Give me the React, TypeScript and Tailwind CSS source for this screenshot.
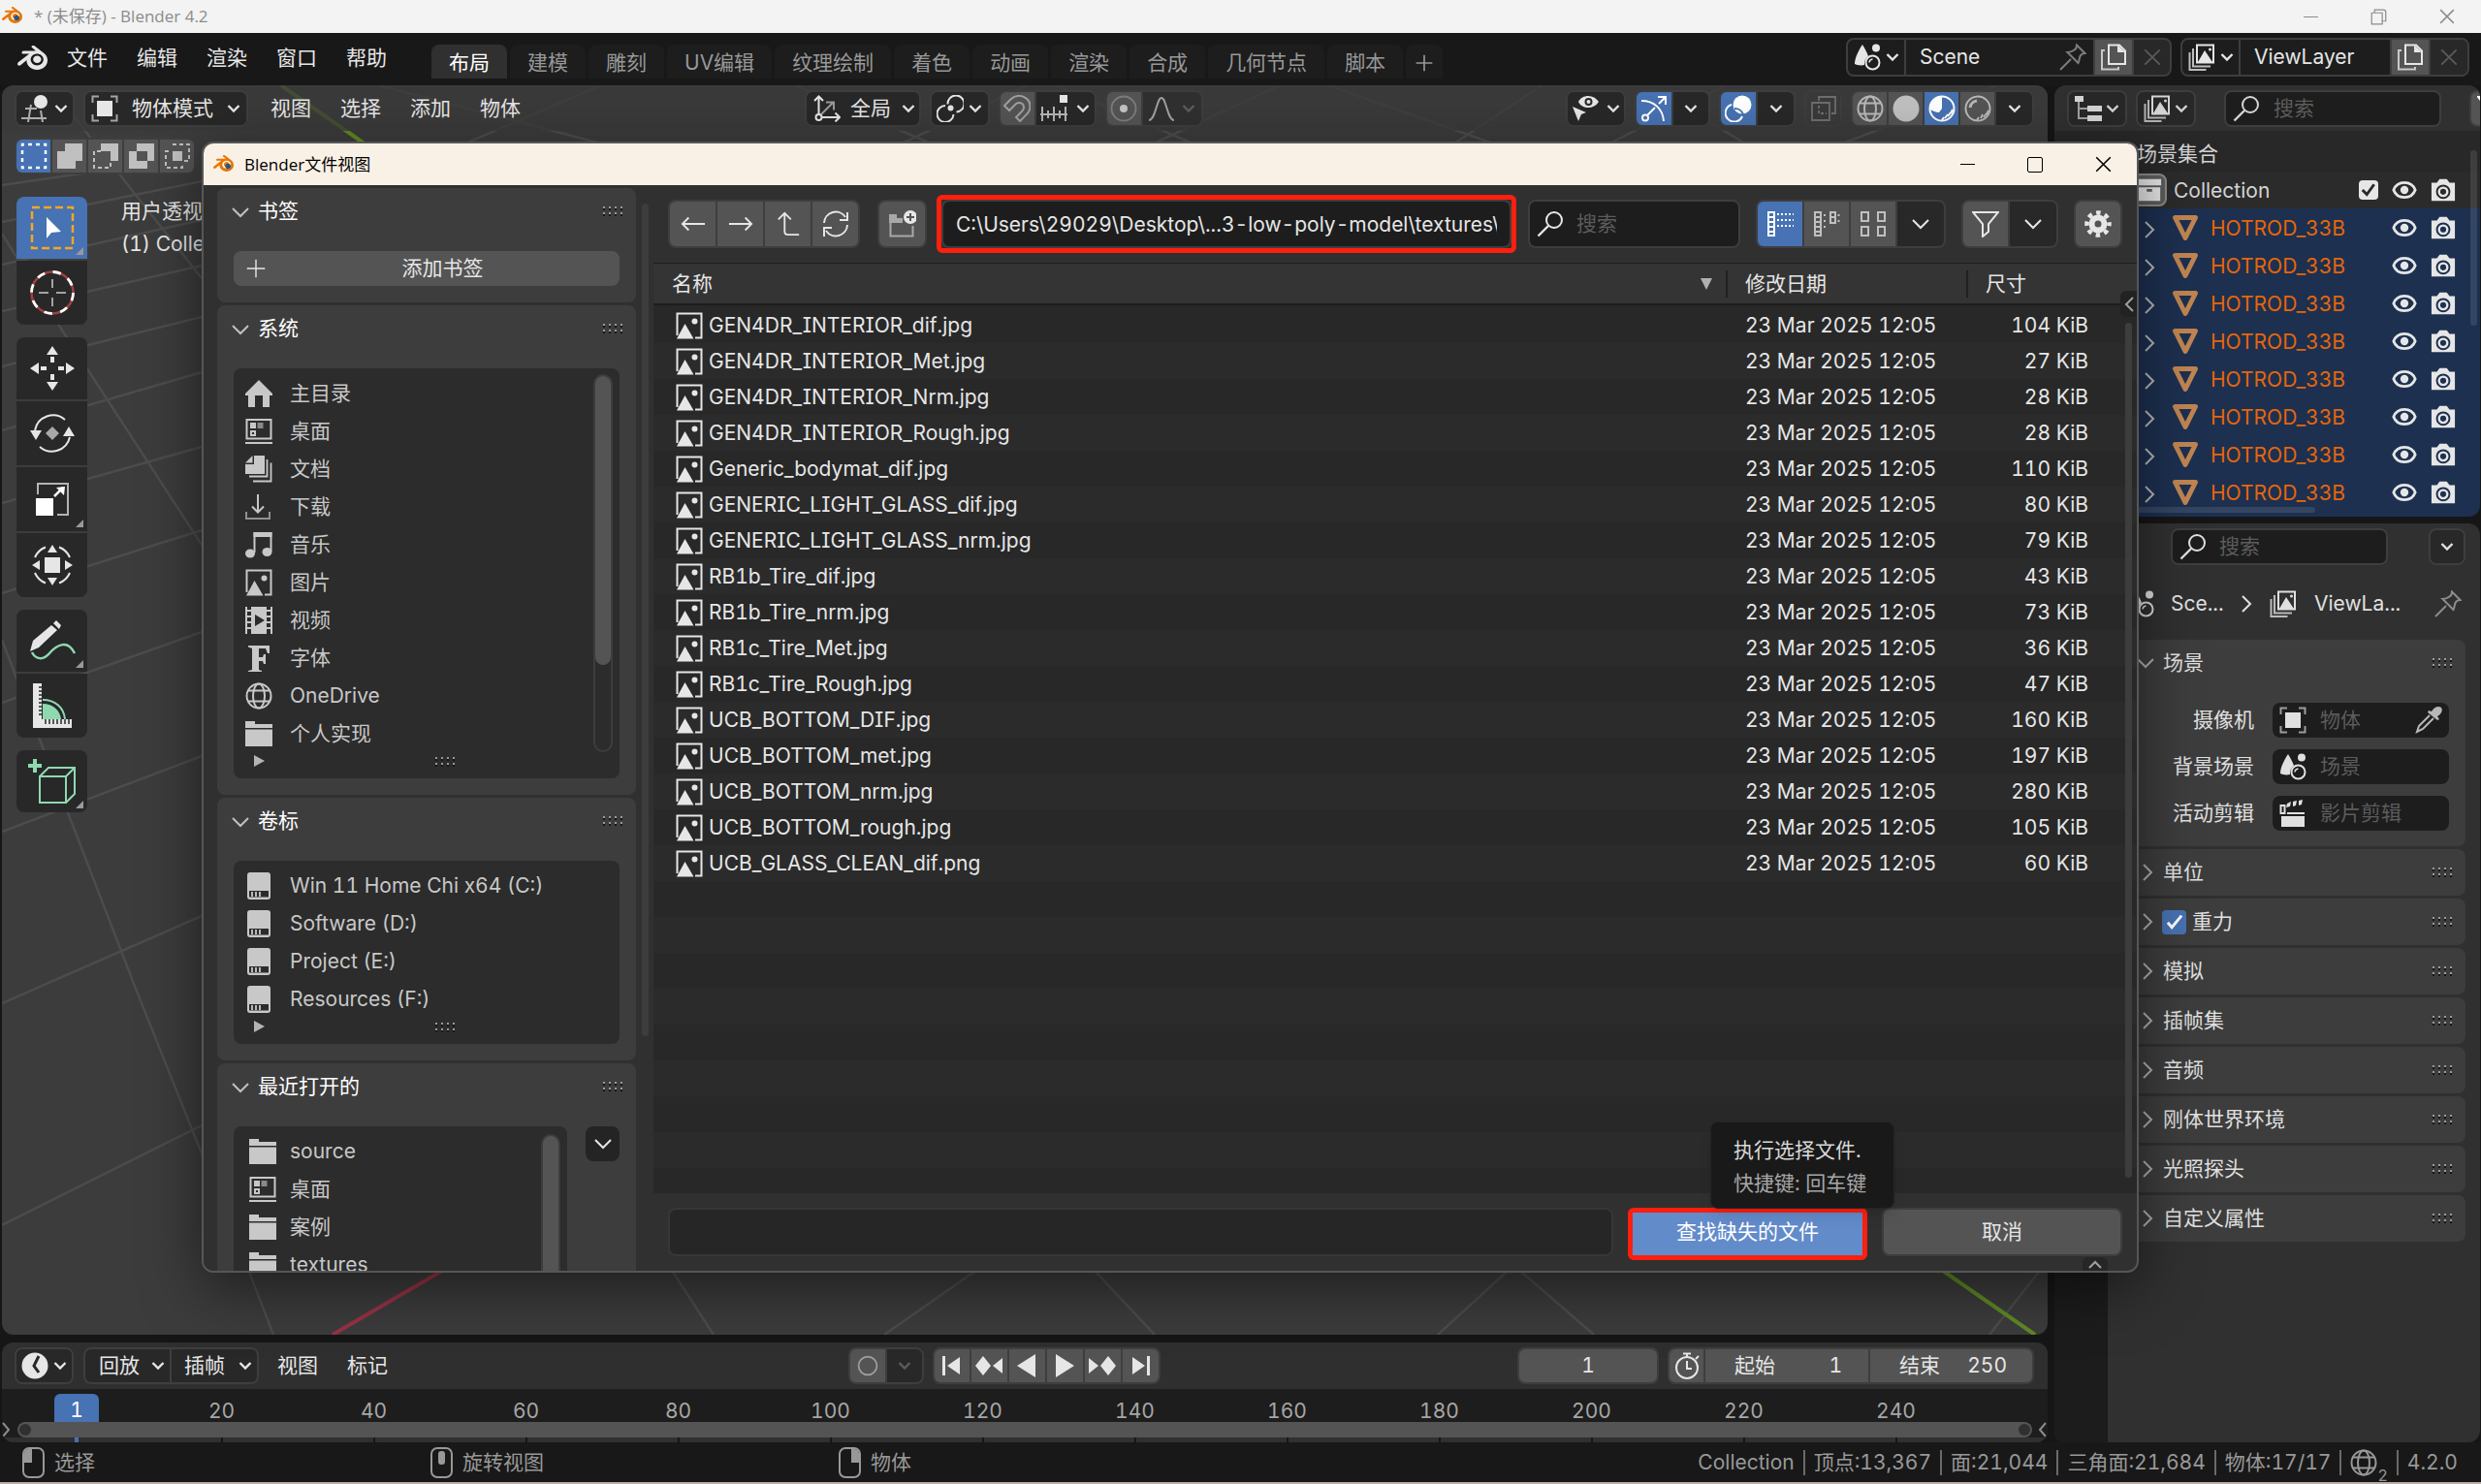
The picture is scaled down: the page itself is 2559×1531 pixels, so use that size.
import type { ReactNode } from "react";
import { SiBlender } from "react-icons/si";

/* ---------- icons ---------- */

function Ic({ children, size = 28, className = "" }: { children: ReactNode; size?: number; className?: string }) {
  return (
    <svg
      width={size}
      height={size}
      viewBox="0 0 28 28"
      fill="none"
      stroke="currentColor"
      strokeWidth="2"
      className={"shrink-0 " + className}
      aria-hidden="true"
    >
      {children}
    </svg>
  );
}

const F = { fill: "currentColor", stroke: "none" } as const;

const Down = ({ className = "" }: { className?: string }) => (
  <svg width="14" height="10" viewBox="0 0 14 10" fill="none" stroke="currentColor" strokeWidth="2.4" className={"shrink-0 " + className} aria-hidden="true">
    <path d="M1.500 2 7 7.600 12.500 2" />
  </svg>
);
const BigDown = () => (
  <svg width="18" height="12" viewBox="0 0 18 12" fill="none" stroke="currentColor" strokeWidth="2" className="shrink-0" aria-hidden="true">
    <path d="M1 2l8 8 8-8" />
  </svg>
);
const Right = () => (
  <svg width="12" height="20" viewBox="0 0 12 20" fill="none" stroke="currentColor" strokeWidth="2" className="shrink-0" aria-hidden="true">
    <path d="M2 2l8 8-8 8" />
  </svg>
);
const Grip = () => (
  <svg width="22" height="10" viewBox="0 0 22 10" className="shrink-0" aria-hidden="true">
    {[0, 6, 12, 18].map((x) => (
      <g key={x}>
        <path d={`M${x + 1} 0h2v2h-2zM${x + 1} 6h2v2h-2z`} fill="#9a9a9a" />
        <path d={`M${x + 1} 2h2v2h-2zM${x + 1} 8h2v2h-2z`} fill="#151515" />
      </g>
    ))}
  </svg>
);

const Logo = () => (
  <svg width="24" height="24" viewBox="0 0 24 24" className="shrink-0" aria-hidden="true">
    <circle cx="15" cy="13.8" r="5.4" fill="#fff" />
    <SiBlender x="0" y="0" width="24" height="24" color="#ea7600" />
    <circle cx="15.2" cy="13.5" r="2.8" fill="#265787" />
  </svg>
);

const Search = () => (
  <Ic>
    <circle cx="18" cy="10" r="8" />
    <path d="M12 16 1.500 26.500" strokeWidth="2.4" />
  </Ic>
);
const Photo = () => (
  <Ic>
    <path d="M20 26.500h6.500V1.500H1.500V24" />
    <path {...F} d="M1 27.500 9.500 12l9 15.500z" />
    <circle {...F} cx="19.500" cy="9.500" r="3" />
  </Ic>
);
const SceneIc = () => (
  <Ic>
    <path {...F} d="M9 1c3 5 5 9 6 12-3 2-4 5-4 9-4 1-8 0-10-1C1 15 5 7 9 1z" />
    <circle {...F} cx="23" cy="4.500" r="4" />
    <circle cx="19.500" cy="19.500" r="7" />
    <path d="M16 19.500a4 4 0 0 1 3.500-3.500" strokeWidth="1.600" />
  </Ic>
);
const LayerIc = () => (
  <Ic>
    <path d="M9 1.500h17v18H9z" />
    <path {...F} d="M10 19l7-12 8 12z" />
    <circle {...F} cx="22.500" cy="6" r="1.500" />
    <path d="M5 5v18.500h18M1.500 9v18h17" opacity=".8" />
  </Ic>
);
const CopyIc = () => (
  <Ic>
    <path d="M9 1.500h11l6 6V21H9z" />
    <path {...F} d="M18 1v8h8z" />
    <path d="M5 7H2v19.500h17V24" opacity=".8" />
  </Ic>
);
const PinIc = () => (
  <Ic>
    <path d="M18 1.500 26.500 10c-3 0-4 1-5 3-1 3-1 5-2 7L8.500 9c3 0 5-1 7-2.500 2-1 2.500-3 2.500-5zM12 16 1 27" />
  </Ic>
);
const CloseIc = ({ size = 18 }: { size?: number }) => (
  <Ic size={size}>
    <path d="M2 2l24 24M26 2 2 26" strokeWidth="2.600" />
  </Ic>
);
const EyeIc = () => (
  <Ic size={26}>
    <path d="M2 14c4-11 20-11 24 0-4 11-20 11-24 0z" strokeWidth="3" />
    <circle {...F} cx="14" cy="14" r="4.500" />
  </Ic>
);
const CamIc = () => (
  <Ic size={26}>
    <path {...F} fillRule="evenodd" d="M1 6h6l3-4h8l3 4h6v20H1zM14 8a8 8 0 1 0 0 16 8 8 0 0 0 0-16z" />
    <circle cx="14" cy="16" r="4.600" strokeWidth="2.600" />
  </Ic>
);
const MeshIc = () => (
  <svg width="28" height="28" viewBox="0 0 28 28" className="shrink-0" aria-hidden="true">
    <path d="M3.500 3.500h21L14 24.500z" fill="none" stroke="#c08552" strokeWidth="5" strokeLinejoin="round" />
  </svg>
);
const ObjectIc = () => (
  <Ic>
    <path {...F} d="M6 6h16v16H6z" />
    <path d="M1.500 8V1.500H8M20 1.500h6.500V8M26.500 20v6.500H20M8 26.500H1.500V20" opacity=".65" />
  </Ic>
);
const FolderIc = () => (
  <Ic>
    <path {...F} d="M0 1h10v3h18v4H0zM0 9.500h28V27H0z" />
  </Ic>
);
const DesktopIc = () => (
  <Ic>
    <path d="M1.500 2h25v19.500h-25zM0 26h28" />
    <path {...F} d="M5 5h6v6H5z" />
    <path {...F} d="M12.500 5h6v6h-6z" opacity=".6" />
    <path d="M6 14h4v4H6z" />
  </Ic>
);
const HomeIc = () => (
  <Ic>
    <path {...F} d="M14 0l14 14v2h-3v12h-7V16h-8v12H3V16H0v-2z" />
  </Ic>
);
const DocsIc = () => (
  <Ic>
    <path {...F} d="M9 0h11v19H0V9h9zM7.500 0v7.500H0z" />
    <path d="M22.500 4v17.500H4M26.500 7.500v19H8" strokeWidth="1.800" />
  </Ic>
);
const DownloadIc = () => (
  <Ic>
    <path d="M13 1v18M7 13.500l6 6 6-6" />
    <path d="M1 19v7h24v-7" opacity=".65" />
  </Ic>
);
const MusicIc = () => (
  <Ic>
    <path d="M9.500 22V2h17v19" />
    <path {...F} d="M8.500 1h19v5h-19z" />
    <ellipse {...F} cx="5" cy="23" rx="5" ry="4.500" />
    <ellipse {...F} cx="22.500" cy="21.500" rx="5" ry="4.500" />
  </Ic>
);
const VideoIc = () => (
  <Ic>
    <path {...F} fillRule="evenodd" d="M6 0h16v28H6zM10 8v12l10-6z" />
    <path d="M1 0v28M27 0v28M0 4h6M0 10h6M0 16h6M0 22h6M22 4h6M22 10h6M22 16h6M22 22h6" />
  </Ic>
);
const FontIc = () => (
  <Ic>
    <path {...F} d="M3 1h22v8h-2l-2-5h-7v9h4l1-3h2v10h-2l-1-3h-4v9l3 1v1H3v-1l4-1V4L3 2.500z" />
  </Ic>
);
const GlobeIc = () => (
  <Ic>
    <circle cx="14" cy="14" r="12.500" />
    <ellipse cx="14" cy="14" rx="6" ry="12.500" />
    <path d="M3 8.500h22M3 19.500h22" />
  </Ic>
);
const DiskIc = () => (
  <Ic>
    <path {...F} fillRule="evenodd" d="M5 0h18q3 0 3 3v22q0 3-3 3H5q-3 0-3-3V3q0-3 3-3zM4 19v6.500h20V19z" />
    <path d="M7 20v5M11 20v5M15 20v5" strokeWidth="1.800" />
  </Ic>
);

/* ---------- shared pieces ---------- */

const CELL = "flex h-full items-center justify-center";

function Group({ children, className = "h-[38px]" }: { children: ReactNode; className?: string }) {
  return (
    <div className={"flex shrink-0 gap-[2px] overflow-hidden rounded-lg border-2 border-[#3e3e3e] bg-[#3e3e3e] " + className}>
      {children}
    </div>
  );
}

function Btn({ label, className = "", children }: { label: string; className?: string; children: ReactNode }) {
  return (
    <button type="button" aria-label={label} className={CELL + " shrink-0 " + className}>
      {children}
    </button>
  );
}

function Picker({ label, value, className = "", icon }: { label: string; value: string; className?: string; icon?: ReactNode }) {
  return (
    <label className={"flex h-full shrink-0 items-center justify-between bg-[#282828] " + className}>
      {icon}
      <select aria-label={label} className="h-full appearance-none bg-transparent p-0 outline-none" defaultValue={value}>
        <option>{value}</option>
      </select>
      <Down />
    </label>
  );
}

/* ---------- top of the main window ---------- */

function TitleBar() {
  return (
    <header className="flex h-[34px] shrink-0 items-center bg-[#f3f3f3] pl-[2px] text-[#8c8c8c]">
      <Logo />
      <h1 className="ml-[9px] font-['Open_Sans','Noto_Sans_CJK_SC',sans-serif] text-[17px]">* (未保存) - Blender 4.2</h1>
      <div className="ml-auto flex items-center gap-[54px] pr-[27px]">
        <button type="button" aria-label="最小化" className="flex h-[16px] w-[15px] items-center"><span className="block h-px w-full bg-[#8c8c8c]" /></button>
        <button type="button" aria-label="还原">
          <Ic size={17}><path d="M2 7h18v19H2zM7 6V2h15q4 0 4 4v15h-5" /></Ic>
        </button>
        <button type="button" aria-label="关闭"><CloseIc size={16} /></button>
      </div>
    </header>
  );
}

const MENUS = ["文件", "编辑", "渲染", "窗口", "帮助"];
const TABS = ["布局", "建模", "雕刻", "UV编辑", "纹理绘制", "着色", "动画", "渲染", "合成", "几何节点", "脚本"];

function TopBar() {
  return (
    <div className="flex h-[54px] shrink-0 bg-[#181818] pl-[18px] pr-[12px] text-[#e6e6e6]">
      <SiBlender size={31} className="mt-[10px] shrink-0" aria-hidden="true" />
      <nav className="ml-[20px] flex h-[52px] items-center gap-[30px]">
        {MENUS.map((m) => (
          <button key={m} type="button">{m}</button>
        ))}
      </nav>
      <div className="ml-[46px] mt-[12px] flex h-[35px] gap-[3px]" role="tablist">
        {TABS.map((t, i) => (
          <button
            key={t + i}
            type="button"
            role="tab"
            aria-selected={i === 0}
            className={"rounded-t-lg px-[18px] pt-[3px] " + (i === 0 ? "bg-[#303030] text-white" : "bg-[#1d1d1d] text-[#989898]")}
          >
            {t}
          </button>
        ))}
        <button type="button" aria-label="添加工作区" className="rounded-t-lg bg-[#1d1d1d] px-[10px] pt-[2px] text-[#989898]">
          <Ic size={18}><path d="M14 1v26M1 14h26" strokeWidth="2.600" /></Ic>
        </button>
      </div>
      <div className="ml-auto flex gap-[9px] pt-[5px]">
        <Group className="h-[40px]">
          <Btn label="浏览场景" className="w-[58px] gap-[5px] bg-[#1d1d1d]"><SceneIc /><Down /></Btn>
          <div className="flex w-[193px] items-center bg-[#1d1d1d] pl-[14px] pr-[7px]">
            <input aria-label="场景名称" defaultValue="Scene" className="w-0 flex-1 bg-transparent outline-none" />
            <button type="button" aria-label="固定" className="text-[#7c7c7c]"><PinIc /></button>
          </div>
          <Btn label="新建场景" className="w-[38px] bg-[#545454]"><CopyIc /></Btn>
          <Btn label="删除场景" className="w-[37px] bg-[#282828] text-[#5c5c5c]"><CloseIc /></Btn>
        </Group>
        <Group className="h-[40px]">
          <Btn label="浏览视图层" className="w-[58px] gap-[5px] bg-[#1d1d1d]"><LayerIc /><Down /></Btn>
          <div className="flex w-[154px] items-center bg-[#1d1d1d] pl-[14px]">
            <input aria-label="视图层名称" defaultValue="ViewLayer" className="w-0 flex-1 bg-transparent outline-none" />
          </div>
          <Btn label="新建视图层" className="w-[38px] bg-[#545454]"><CopyIc /></Btn>
          <Btn label="删除视图层" className="w-[38px] bg-[#282828] text-[#5c5c5c]"><CloseIc /></Btn>
        </Group>
      </div>
    </div>
  );
}

/* ---------- 3D viewport ---------- */

const GRID = [
  "M2 191 133 172", "M2 229 208 187", "M2 273 208 227", "M2 321 208 274", "M2 378 208 327", "M2 444 208 384",
  "M2 519 208 461", "M2 612 208 547", "M2 725 208 652", "M2 858 208 780", "M2 1035 208 945", "M2 1264 208 1161",
  "M60 100 208 287", "M2 241 63 339 208 562", "M2 660 41 763 140 1020 208 1190 257 1312 282 1377", "M694 1312 736 1377",
  "M1005 1312 912 1377", "M1130 1312 1191 1377", "M1554 1312 1483 1377", "M1569 1312 1644 1377", "M2103 1312 2052 1377",
  "M820 88 960 148", "M1060 88 930 148", "M1090 88 1230 148", "M1320 88 1190 148", "M1370 88 1540 148", "M1590 88 1500 148",
  "M1660 148 1780 88", "M1720 100 1800 148", "M1900 148 2060 88", "M390 88 620 148", "M620 88 480 148",
];

const TOOL = "relative flex w-full items-center justify-center";
const Corner = () => <span className="absolute bottom-[4px] right-[4px] border-b-[8px] border-l-[8px] border-b-[#9a9a9a] border-l-transparent" />;

function ToolShelf() {
  return (
    <div className="flex w-[73px] flex-col gap-[13px] text-[#e6e6e6]">
      <div className="flex flex-col gap-[2px] overflow-hidden rounded-lg">
        <button type="button" aria-label="框选" className={TOOL + " h-[64px] bg-[#4772b3]"}>
          <svg width="46" height="46" viewBox="0 0 46 46" aria-hidden="true">
            <path d="M2 2h42v42H2z" fill="none" stroke="#f5a623" strokeWidth="2.500" strokeDasharray="8 4" />
            <path d="M17 12v22l5-6 10-1z" fill="#fff" />
          </svg>
          <Corner />
        </button>
        <button type="button" aria-label="游标" className={TOOL + " h-[66px] bg-[#282828]"}>
          <svg width="48" height="48" viewBox="0 0 48 48" fill="none" aria-hidden="true">
            <circle cx="24" cy="24" r="21.500" stroke="#a04043" strokeWidth="2.500" />
            <circle cx="24" cy="24" r="21.500" stroke="#fff" strokeWidth="2.800" strokeDasharray="8.400 8.480" />
            <path d="M24 10v9M24 29v9M10 24h10M28 24h10" stroke="#ccc" strokeWidth="1.500" />
          </svg>
        </button>
      </div>
      <div className="flex flex-col gap-[2px] overflow-hidden rounded-lg">
        <button type="button" aria-label="移动" className={TOOL + " h-[64px] bg-[#282828]"}>
          <svg width="46" height="46" viewBox="0 0 46 46" fill="currentColor" aria-hidden="true">
            <path d="M23 0l6 9H17zM23 46l6-9H17zM0 23l9-6v12zM46 23l-9-6v12zM21 11h4v6h-4zM21 29h4v6h-4zM11 21h6v4h-6zM29 21h6v4h-6z" />
          </svg>
        </button>
        <button type="button" aria-label="旋转" className={TOOL + " h-[66px] bg-[#282828]"}>
          <svg width="46" height="46" viewBox="0 0 46 46" fill="none" stroke="currentColor" strokeWidth="2" aria-hidden="true">
            <path d="M5 20A19 19 0 0 1 36 9M41 27A19 19 0 0 1 10 37" />
            <path {...F} d="M0 20h12l-6 10zM46 26H34l6-10z" />
            <path d="M23 16l7 7-7 7-7-7z" fill="#a8a8a8" stroke="none" />
          </svg>
        </button>
        <button type="button" aria-label="缩放" className={TOOL + " h-[66px] bg-[#282828]"}>
          <svg width="38" height="38" viewBox="0 0 38 38" fill="none" aria-hidden="true">
            <path d="M4 14V3h31v32H24" stroke="#b4b4b4" strokeWidth="2" />
            <path d="M2 18h18v18H2z" fill="#fff" />
            <path d="M21 16l9-9" stroke="#fff" strokeWidth="2.500" />
            <path d="M23 7l9-1-1 9z" fill="#fff" />
          </svg>
          <Corner />
        </button>
        <button type="button" aria-label="变换" className={TOOL + " h-[66px] bg-[#282828]"}>
          <svg width="44" height="44" viewBox="0 0 44 44" fill="none" stroke="currentColor" strokeWidth="2" aria-hidden="true">
            <path {...F} d="M14 14h16v16H14zM22 1l5 8H17zM22 43l5-8H17zM1 22l8-5v10zM43 22l-8-5v10z" />
            <path d="M15 3.500A20 20 0 0 0 4 14M29 3.500A20 20 0 0 1 40 14M15 40.500A20 20 0 0 1 4 30M29 40.500A20 20 0 0 0 40 30" />
          </svg>
        </button>
      </div>
      <div className="flex flex-col gap-[2px] overflow-hidden rounded-lg">
        <button type="button" aria-label="标注" className={TOOL + " h-[64px] bg-[#282828]"}>
          <svg width="50" height="44" viewBox="0 0 50 44" fill="none" aria-hidden="true">
            <path d="M4 34C8 42 16 42 22 35s18-16 26 0" stroke="#8fd9b0" strokeWidth="2.500" />
            <path d="M2 33l3-11L24 6l6 5L11 29z M26 4l3-3 5 5-2 4z" fill="#e6e6e6" />
          </svg>
          <Corner />
        </button>
        <button type="button" aria-label="测量" className={TOOL + " h-[66px] bg-[#282828]"}>
          <svg width="42" height="46" viewBox="0 0 42 46" fill="none" aria-hidden="true">
            <path d="M11 17c13 0 22 8 23 20" stroke="#8fd9b0" strokeWidth="2" />
            <path d="M11 21c11 0 18 7 19 16H11z" fill="#8fd9b0" />
            <path d="M1 0h9v37h31v9H1z" fill="#e6e6e6" />
            <path d="M7 4h4M7 8h4M7 12h4M7 16h4M7 20h4M7 24h4M7 28h4M7 32h4M14 37v5M18 37v5M22 37v5M26 37v5M30 37v5M34 37v5M38 37v5" stroke="#282828" strokeWidth="1.500" />
          </svg>
        </button>
      </div>
      <button type="button" aria-label="添加立方体" className={TOOL + " h-[64px] rounded-lg bg-[#282828]"}>
        <svg width="50" height="46" viewBox="0 0 50 46" fill="none" stroke="#8fd9b0" strokeWidth="2" aria-hidden="true">
          <path d="M7 0v14M0 7h14" strokeWidth="4" />
          <path d="M12 18h27v27H12zM12 18l9-9h27v27l-9 9M39 18l9-9" />
        </svg>
        <Corner />
      </button>
    </div>
  );
}

const SELECT_MODES: ReactNode[] = [
  <path key="a" d="M2 2h24v24H2z" strokeWidth="2.500" strokeDasharray="4 4" strokeDashoffset="2" />,
  <path key="b" {...F} d="M9 1h18v18h-7v8H1V9h8z" />,
  <g key="c"><path {...F} d="M9 1h18v18h-8V9H9z" /><path d="M9 9H2v17h17v-7" strokeDasharray="4 3" /></g>,
  <path key="d" {...F} fillRule="evenodd" d="M9 1h18v18h-7v8H1V9h8zM9 9v10h11V9z" />,
  <g key="e"><path {...F} d="M9 9h10v10H9z" /><path d="M9 2h17v17h-5M5 9H2v17h17v-4" strokeDasharray="4 3" /></g>,
];

function ViewportHeader() {
  return (
    <div className="flex h-[47px] items-center bg-[#393939]/75 pl-[13px] pr-[14px] text-[#e6e6e6]">
      <Group>
        <Btn label="编辑器类型" className="w-[58px] gap-[6px] bg-[#282828]">
          <Ic>
            <circle {...F} cx="20" cy="7" r="7" />
            <path d="M0 24h26M4 14h12M10 10 7 28M20 16l2 12" opacity=".7" />
          </Ic>
          <Down />
        </Btn>
      </Group>
      <Group className="ml-[9px] h-[38px]">
        <Picker label="模式" value="物体模式" icon={<ObjectIc />} className="w-[166px] px-[6px]" />
      </Group>
      <nav className="ml-[23px] flex gap-[30px]">
        {["视图", "选择", "添加", "物体"].map((m) => (
          <button key={m} type="button">{m}</button>
        ))}
      </nav>
      <div className="flex flex-1 justify-center gap-[9px] pr-[82px]">
        <Group>
          <Picker
            label="变换坐标系"
            value="全局"
            className="w-[116px] pl-[7px] pr-[4px]"
            icon={
              <Ic>
                <path d="M5.500 2v21H27M1 6l4.500-4.500L10 6M22.500 18.500 27 23l-4.500 4.500" />
                <path d="M8 20 20 8M13 7.500h8v8" opacity=".6" />
                <circle cx="5.500" cy="23" r="3" fill="#282828" />
              </Ic>
            }
          />
        </Group>
        <Group>
          <Btn label="轴心点" className="w-[58px] gap-[5px] bg-[#282828]">
            <Ic>
              <circle {...F} cx="14.500" cy="13.500" r="3" />
              <path d="M11.500 9.500a8.500 8.500 0 1 1 9 8M9 11a8.500 8.500 0 1 0 8.500 9" />
            </Ic>
            <Down />
          </Btn>
        </Group>
        <Group>
          <Btn label="吸附" className="w-[35px] bg-[#545454] text-[#a0a0a0]">
            <Ic><path d="M1 11 8 4c8-7 22-1 19 11-1 3-2 4-10 12l-4-4c7-7 8-8 8-10 0-5-5-6-8-4l-7 7z" /></Ic>
          </Btn>
          <Btn label="吸附目标" className="w-[60px] gap-[9px] bg-[#282828]">
            <Ic><path d="M2 12v15M8 16v8M14 12v15M20 16v8M26 12v15M0 20h28" opacity=".75" /><path {...F} d="M20 0h8v8h-8z" /></Ic>
            <Down />
          </Btn>
        </Group>
        <Group>
          <Btn label="衰减编辑" className="w-[35px] bg-[#545454] text-[#7c7c7c]">
            <Ic><circle cx="14" cy="14" r="12.500" /><circle cx="14" cy="14" r="4" fill="#c4c4c4" stroke="none" /></Ic>
          </Btn>
          <Btn label="衰减类型" className="w-[60px] gap-[7px] bg-[#303030] text-[#a0a0a0]">
            <Ic><path d="M1 26C8 26 9 3 14 3s6 23 13 23" /></Ic>
            <Down className="opacity-40" />
          </Btn>
        </Group>
      </div>
      <div className="ml-auto flex gap-[9px]">
        <Group>
          <Btn label="可见性" className="w-[58px] gap-[8px] bg-[#282828]">
            <Ic><path {...F} fillRule="evenodd" d="M7 7c4-8 16-8 21 0-5 8-17 8-21 0zM17.500 3a4 4 0 1 0 0 8 4 4 0 0 0 0-8zM1 12l14 6-5 2-3 7z" /><circle {...F} cx="17.500" cy="7" r="2" /></Ic>
            <Down />
          </Btn>
        </Group>
        <Group>
          <Btn label="Gizmo" className="w-[36px] bg-[#4772b3] text-white">
            <Ic><path d="M1 6c13 0 22 8 23 21M7 21 15 13M19 9 26 2M18 2h8v8" /><circle cx="5" cy="23.500" r="3" fill="#4772b3" /></Ic>
          </Btn>
          <Btn label="Gizmo 选项" className="w-[36px] bg-[#282828]"><Down /></Btn>
        </Group>
        <Group>
          <Btn label="叠加层" className="w-[36px] bg-[#4772b3] text-white">
            <Ic><circle {...F} cx="18" cy="10" r="9.500" /><path d="M7 10a9 9 0 1 0 11 12" /><path d="M10 14a9 9 0 0 1 9 6" stroke="#4772b3" /></Ic>
          </Btn>
          <Btn label="叠加层选项" className="w-[37px] bg-[#282828]"><Down /></Btn>
        </Group>
        <Group>
          <Btn label="透视模式" className="w-[35px] bg-[#3a3a3a] text-[#6e6e6e]">
            <Ic><path d="M2 8h18v18H2zM9 6V2h17v17h-4" strokeWidth="1.800" /><path d="M9 11v8h8" strokeWidth="1.800" strokeDasharray="3 2" /></Ic>
          </Btn>
        </Group>
        <Group>
          <Btn label="线框" className="w-[35px] bg-[#545454] text-[#b8b8b8]"><GlobeIc /></Btn>
          <Btn label="实体" className="w-[35px] bg-[#545454] text-[#c0c0c0]"><Ic><circle {...F} cx="14" cy="14" r="13.500" /></Ic></Btn>
          <Btn label="材质预览" className="w-[35px] bg-[#4772b3] text-white">
            <Ic><circle cx="14" cy="14" r="12.500" /><path {...F} d="M14 1v13l-3 4A17 17 0 0 1 1 14 13 13 0 0 1 14 1z" /><path d="M14 26l2-3M17 24l3-4M20 22l3-4M23 19l2-4" /></Ic>
          </Btn>
          <Btn label="渲染" className="w-[35px] bg-[#545454] text-[#b8b8b8]">
            <Ic><circle cx="14" cy="14" r="12.500" /><path d="M6 13a8 8 0 0 1 7-7" strokeWidth="3" /><path d="M13 26l2-3M17 24l2-4M20 23l3-4M23 20l2-4" /></Ic>
          </Btn>
          <Btn label="着色选项" className="w-[37px] bg-[#282828]"><Down /></Btn>
        </Group>
      </div>
    </div>
  );
}

function Viewport() {
  return (
    <section className="relative min-h-0 flex-1 overflow-hidden rounded-xl bg-[#3c3c3c]" aria-label="3D 视图">
      <svg className="absolute inset-0 h-full w-full" viewBox="2 88 2110 1289" preserveAspectRatio="none" fill="none" aria-hidden="true">
        {GRID.map((d) => (
          <path key={d} d={d} stroke="#4c4c4c" strokeWidth="2.500" />
        ))}
        <path d="M456 1311 343 1377" stroke="#963346" strokeWidth="4" />
        <path d="M2004 1311 2099 1377M290 88 400 165" stroke="#5f8a24" strokeWidth="4" />
      </svg>
      <div className="relative">
        <ViewportHeader />
        <div className="ml-[13px] mt-[7px] flex">
          <Group>
            {SELECT_MODES.map((m, i) => (
              <Btn key={i} label={`选择模式 ${i + 1}`} className={"w-[35px] " + (i === 0 ? "bg-[#4772b3] text-white" : "bg-[#545454] text-[#c0c0c0]")}>
                <Ic>{m}</Ic>
              </Btn>
            ))}
          </Group>
        </div>
        <div className="mt-[23px] flex pl-[15px]">
          <ToolShelf />
          <p className="ml-[35px] mt-[-2px] leading-[34px] text-[#e6e6e6]">
            用户透视
            <br />
            (1) Collection
          </p>
        </div>
      </div>
    </section>
  );
}

/* ---------- timeline ---------- */

const FRAMES = [20, 40, 60, 80, 100, 120, 140, 160, 180, 200, 220, 240];

function Timeline() {
  return (
    <section className="flex h-[103px] shrink-0 flex-col overflow-hidden rounded-xl bg-[#303030] text-[#e6e6e6]" aria-label="时间线">
      <div className="flex h-[48px] shrink-0 items-center bg-[#2f2f2f] pl-[13px] pr-[14px]">
        <Group>
          <Btn label="编辑器类型" className="w-[57px] gap-[5px] bg-[#282828]">
            <Ic><circle {...F} cx="14" cy="14" r="13.500" /><path d="M18 4l-5 10 5 7" stroke="#282828" strokeWidth="3" /></Ic>
            <Down />
          </Btn>
        </Group>
        <Group className="ml-[10px] h-[38px]">
          <Picker label="回放" value="回放" className="w-[87px] pl-[14px] pr-[5px]" />
          <Picker label="插帧" value="插帧" className="w-[88px] pl-[13px] pr-[5px]" />
        </Group>
        <nav className="ml-[19px] flex gap-[30px]">
          <button type="button">视图</button>
          <button type="button">标记</button>
        </nav>
        <div className="flex flex-1 justify-center gap-[9px] pl-[106px]">
          <Group>
            <Btn label="自动插帧" className="w-[36px] bg-[#545454] text-[#a0a0a0]"><Ic size={24}><circle cx="14" cy="14" r="11" /></Ic></Btn>
            <Btn label="自动插帧选项" className="w-[36px] bg-[#282828] text-[#5c5c5c]"><Down /></Btn>
          </Group>
          <Group>
            <Btn label="跳到起点" className="w-[36px] bg-[#545454]"><Ic><path {...F} d="M4 4h3v20H4zM22 5v18L9 14z" /></Ic></Btn>
            <Btn label="上一关键帧" className="w-[37px] bg-[#545454]"><Ic><path {...F} d="M8 4l8 10-8 10L0 14zM28 6v16L18 14z" /></Ic></Btn>
            <Btn label="倒放" className="w-[37px] bg-[#545454]"><Ic><path {...F} d="M23 2v24L4 14z" /></Ic></Btn>
            <Btn label="播放" className="w-[37px] bg-[#545454]"><Ic><path {...F} d="M5 2v24l19-12z" /></Ic></Btn>
            <Btn label="下一关键帧" className="w-[37px] bg-[#545454]"><Ic><path {...F} d="M20 4l8 10-8 10-8-10zM0 6v16l10-8z" /></Ic></Btn>
            <Btn label="跳到终点" className="w-[37px] bg-[#545454]"><Ic><path {...F} d="M21 4h3v20h-3zM6 5v18l13-9z" /></Ic></Btn>
          </Group>
        </div>
        <Group>
          <input aria-label="当前帧" defaultValue="1" className="w-[142px] bg-[#545454] text-center outline-none" />
        </Group>
        <Group className="ml-[9px] h-[38px]">
          <Btn label="使用预览范围" className="w-[35px] bg-[#545454]">
            <Ic><circle cx="14" cy="16" r="11" /><path d="M14 9v8h5M10 1.500h8M14 1v4M23 7l3-3" /></Ic>
          </Btn>
          <label className="flex w-[168px] items-center bg-[#545454] pl-[30px] pr-[27px]">
            起始
            <input defaultValue="1" className="w-0 flex-1 bg-transparent text-right outline-none" />
          </label>
          <label className="flex w-[167px] items-center bg-[#545454] pl-[30px] pr-[26px]">
            结束
            <input defaultValue="250" className="w-0 flex-1 bg-transparent text-right outline-none" />
          </label>
        </Group>
      </div>
      <div className="flex h-[34px] shrink-0 items-end bg-[#1d1d1d] pl-[54px] text-[#a6a6a6]">
        <span className="h-[29px] w-[46px] rounded-t-md bg-[#4772b3] text-center leading-[33px] text-white">1</span>
        <div className="ml-[48px] flex">
          {FRAMES.map((f) => (
            <span key={f} className="w-[157px] text-center leading-[22px]">{f}</span>
          ))}
        </div>
      </div>
      <div className="flex h-[16px] shrink-0 items-center bg-[#1d1d1d] text-[#8c8c8c]">
        <svg width="16" height="16" viewBox="0 0 16 16" fill="none" stroke="currentColor" strokeWidth="2" aria-hidden="true"><path d="M1 1l6 7-6 7" /></svg>
        <div className="flex h-[16px] flex-1 items-center justify-between rounded-full bg-[#545454] px-[2px]">
          <span className="h-[12px] w-[12px] rounded-full bg-[#303030]" />
          <span className="h-[12px] w-[12px] rounded-full bg-[#303030]" />
        </div>
        <svg width="16" height="16" viewBox="0 0 16 16" fill="none" stroke="currentColor" strokeWidth="2" aria-hidden="true"><path d="M14 1 8 8l6 7" /></svg>
      </div>
      <div className="flex flex-1 bg-[#303030] pl-[75px]">
        <span className="h-full w-[4px] bg-[#4772b3]" />
        <div className="ml-[69px] flex">
          {FRAMES.map((f) => (
            <span key={f} className="flex w-[157px] justify-center"><span className="h-full w-[2px] bg-[#161616]" /></span>
          ))}
        </div>
      </div>
    </section>
  );
}

/* ---------- outliner ---------- */

function Outliner() {
  return (
    <section className="flex h-[445px] shrink-0 flex-col overflow-hidden rounded-xl bg-[#282828] text-[#d4d4d4]" aria-label="大纲视图">
      <div className="flex h-[47px] shrink-0 items-center overflow-hidden bg-[#303030] pl-[13px]">
        <Group>
          <Btn label="编辑器类型" className="w-[58px] gap-[4px] bg-[#282828]">
            <Ic><path {...F} d="M0 1h9v6H0zM13 11h15v6H13zM13 21h15v6H13z" /><path d="M4 7v17h9M4 14h9" opacity=".7" /></Ic>
            <Down />
          </Btn>
        </Group>
        <Group className="ml-[9px] h-[38px]">
          <Btn label="显示模式" className="w-[58px] gap-[4px] bg-[#282828]"><LayerIc /><Down /></Btn>
        </Group>
        <Group className="ml-[29px] h-[38px]">
          <label className="flex w-[220px] items-center gap-[14px] bg-[#1d1d1d] pl-[7px]">
            <Search />
            <input type="search" aria-label="搜索大纲" placeholder="搜索" className="w-0 flex-1 bg-transparent outline-none placeholder:text-[#5c5c5c]" />
          </label>
        </Group>
        <Group className="ml-[29px] h-[38px]">
          <Btn label="过滤" className="w-[40px] bg-[#545454] text-white"><Ic><path d="M1 2h26L17 14v12l-6-4v-8z" /></Ic></Btn>
        </Group>
      </div>
      <div className="relative flex-1">
        <div className="flex h-[42px] items-center pl-[85px] pt-[5px]">场景集合</div>
        <div className="flex h-[38px] items-center bg-[#2b2b2b] pl-[80px] pr-[25px]">
          <span className="flex h-[34px] w-[36px] items-center justify-center rounded-lg border-2 border-[#8a8a8a] bg-[#5c5c5c] text-[#e6e6e6]">
            <Ic size={26}><path {...F} fillRule="evenodd" d="M1 2h26v7H1zM2 11h24v15H2zM11 13v3h6v-3z" /></Ic>
          </span>
          <span className="ml-[7px] flex-1 pt-[2px]">Collection</span>
          <label className="flex h-[20px] w-[20px] items-center justify-center rounded-sm bg-[#e6e6e6]">
            <input type="checkbox" defaultChecked aria-label="Collection 启用" className="sr-only" />
            <Ic size={16}><path d="M3 14l8 8L24 4" stroke="#282828" strokeWidth="5" /></Ic>
          </label>
          <div className="ml-[14px] flex gap-[14px] text-[#e6e6e6]">
            <button type="button" aria-label="隐藏"><EyeIc /></button>
            <button type="button" aria-label="禁用渲染"><CamIc /></button>
          </div>
        </div>
        <ul className="h-full bg-[#1d3050]">
          {Array.from({ length: 8 }, (_, i) => (
            <li key={i} className="flex h-[39px] items-center pl-[92px] pr-[25px]">
              <span className="pt-[4px] text-[#b8b8b8]"><Right /></span>
              <span className="ml-[17px]"><MeshIc /></span>
              <span className="ml-[12px] w-[144px] overflow-hidden whitespace-nowrap pt-[3px] text-[#e5660a]">HOTROD_33B</span>
              <div className="ml-auto flex gap-[14px] text-[#e6e6e6]">
                <button type="button" aria-label="隐藏"><EyeIc /></button>
                <button type="button" aria-label="禁用渲染"><CamIc /></button>
              </div>
            </li>
          ))}
        </ul>
        <span className="absolute right-[3px] top-[20px] h-[181px] w-[7px] rounded-full bg-white/10" />
        <span className="absolute bottom-[4px] left-[4px] h-[6px] w-[265px] rounded-full bg-white/10" />
      </div>
    </section>
  );
}

/* ---------- properties ---------- */

const FIELDS: { label: string; value: string; icon: ReactNode; pick?: boolean }[] = [
  { label: "摄像机", value: "物体", icon: <ObjectIc />, pick: true },
  { label: "背景场景", value: "场景", icon: <SceneIc /> },
  {
    label: "活动剪辑",
    value: "影片剪辑",
    icon: <Ic><path {...F} d="M2 17h24v11H2zM8 4l4-2-1 5-4 1zM14 2l4-1-1 5-3 1zM20 1l4-1-1 5-3 1z" /><path d="M1.500 6h4v8h-4zM8 14h18" /></Ic>,
  },
];
const SECTIONS = ["单位", "重力", "模拟", "插帧集", "音频", "刚体世界环境", "光照探头", "自定义属性"];

function Properties() {
  return (
    <section className="flex min-h-0 flex-1 overflow-hidden rounded-xl bg-[#303030] text-[#e0e0e0]" aria-label="属性">
      <div className="w-[55px] shrink-0 bg-[#1c1c1c]" />
      <div className="min-w-0 flex-1 pr-[15px]">
        <div className="flex h-[48px] items-center pl-[65px]">
          <Group>
            <label className="flex w-[220px] items-center gap-[13px] bg-[#1d1d1d] pl-[7px]">
              <Search />
              <input type="search" aria-label="搜索属性" placeholder="搜索" className="w-0 flex-1 bg-transparent outline-none placeholder:text-[#5c5c5c]" />
            </label>
          </Group>
          <Group className="ml-auto h-[38px]">
            <Btn label="选项" className="w-[34px] bg-[#282828]"><Down /></Btn>
          </Group>
        </div>
        <div className="flex h-[72px] items-center pb-[3px] pl-[20px] pr-[4px]">
          <SceneIc />
          <span className="ml-[17px] w-[56px]">Sce...</span>
          <span className="ml-[16px]"><Right /></span>
          <span className="ml-[18px]"><LayerIc /></span>
          <span className="ml-[18px] flex-1">ViewLa...</span>
          <button type="button" aria-label="固定" className="text-[#8c8c8c]"><PinIc /></button>
        </div>
        <div className="flex flex-col gap-[3px]">
          <div className="h-[213px] rounded-lg bg-[#3d3d3d]">
            <div className="flex h-[48px] items-center pl-[30px] pr-[13px]">
              <span className="text-[#b0b0b0]"><BigDown /></span>
              <h2 className="ml-[9px] flex-1">场景</h2>
              <Grip />
            </div>
            <div className="mt-[17px] flex flex-col gap-[12px] pr-[17px]">
              {FIELDS.map((f) => (
                <label key={f.label} className="flex h-[36px] items-center justify-end">
                  {f.label}
                  <span className="ml-[19px] flex h-full w-[182px] items-center rounded-lg bg-[#1d1d1d] pl-[7px] pr-[7px]">
                    {f.icon}
                    <input placeholder={f.value} className="ml-[14px] w-0 flex-1 bg-transparent outline-none placeholder:text-[#5c5c5c]" />
                    {f.pick && (
                      <Ic className="text-[#b8b8b8]">
                        <path {...F} d="M27 1c2 3 0 7-4 9l2 3-2 1L13 6l1-2 3 1c3-5 7-6 10-4z" />
                        <path d="M15 9 4 20l-2 6 6-3L19 12" />
                      </Ic>
                    )}
                  </span>
                </label>
              ))}
            </div>
          </div>
          {SECTIONS.map((s) => (
            <div key={s} className="flex h-[48px] items-center rounded-lg bg-[#3d3d3d] pl-[35px] pr-[13px]">
              <span className="text-[#b0b0b0]"><Right /></span>
              {s === "重力" && (
                <label className="ml-[9px] mr-[-4px] flex h-[25px] w-[25px] items-center justify-center rounded bg-[#4772b3]">
                  <input type="checkbox" defaultChecked aria-label="重力" className="sr-only" />
                  <Ic size={20}><path d="M4 15l6 7L24 5" stroke="#fff" strokeWidth="4" /></Ic>
                </label>
              )}
              <h2 className="ml-[10px] flex-1">{s}</h2>
              <Grip />
            </div>
          ))}
        </div>
      </div>
    </section>
  );
}

/* ---------- status bar ---------- */

function Mouse({ part }: { part: "l" | "m" | "r" }) {
  return (
    <svg width="23" height="32" viewBox="0 0 23 32" fill="none" stroke="#989898" strokeWidth="2" aria-hidden="true">
      <rect x="1" y="1" width="21" height="30" rx="6" />
      {part === "l" && <path d="M2 16V7q0-5 5-5h3v14z" fill="#989898" stroke="none" />}
      {part === "m" && <rect x="8" y="4" width="7" height="14" rx="3" fill="#989898" stroke="none" />}
      {part === "r" && <path d="M21 16V7q0-5-5-5h-3v14z" fill="#989898" stroke="none" />}
    </svg>
  );
}

const STATS = ["Collection", "顶点:13,367", "面:21,044", "三角面:21,684", "物体:17/17"];

function StatusBar() {
  return (
    <footer className="flex h-[41px] shrink-0 items-center bg-[#181818] pl-[23px] pr-[24px] text-[#989898]">
      <div className="flex w-[421px] items-center gap-[10px]"><Mouse part="l" />选择</div>
      <div className="flex w-[421px] items-center gap-[10px]"><Mouse part="m" />旋转视图</div>
      <div className="flex items-center gap-[10px]"><Mouse part="r" />物体</div>
      <div className="ml-auto flex items-center gap-[9px]">
        {STATS.map((s) => (
          <span key={s} className="flex items-center gap-[9px]">
            {s}
            <span className="h-[26px] w-[2px] bg-[#6a6a6a]" />
          </span>
        ))}
        <span className="flex items-center"><GlobeIc /><sub className="mt-[18px] text-[16px] leading-none">2</sub></span>
        <span className="h-[26px] w-[2px] bg-[#6a6a6a]" />
        4.2.0
      </div>
    </footer>
  );
}

/* ---------- file dialog ---------- */

function Panel({ title, children }: { title: string; children: ReactNode }) {
  return (
    <section className="shrink-0 rounded-lg bg-[#3d3d3d] px-[17px] pb-[17px]">
      <div className="mb-[17px] flex h-[48px] items-center text-[#c0c0c0]">
        <span className="ml-[-2px] pt-[2px]"><BigDown /></span>
        <h2 className="ml-[9px] flex-1 text-white">{title}</h2>
        <span className="mr-[-4px]"><Grip /></span>
      </div>
      {children}
    </section>
  );
}

function Places({ items, inset }: { items: { icon: ReactNode; name: string }[]; inset?: boolean }) {
  return (
    <ul className="flex-1 text-[#c8c8c8]">
      {items.map((p) => (
        <li key={p.name}>
          <button type="button" className={"flex h-[39px] w-full items-center " + (inset ? "gap-[14px] pl-[16px]" : "gap-[18px] pl-[12px]")}>
            {p.icon}
            {p.name}
          </button>
        </li>
      ))}
    </ul>
  );
}

const ListFoot = () => (
  <div className="flex h-[27px] items-start pl-[21px] pt-[3px]">
    <span className="border-y-[6px] border-l-[11px] border-y-transparent border-l-[#b4b4b4]" />
    <span className="ml-[175px] mt-[2px]"><Grip /></span>
  </div>
);

const SYSTEM = [
  { icon: <HomeIc />, name: "主目录" },
  { icon: <DesktopIc />, name: "桌面" },
  { icon: <DocsIc />, name: "文档" },
  { icon: <DownloadIc />, name: "下载" },
  { icon: <MusicIc />, name: "音乐" },
  { icon: <Photo />, name: "图片" },
  { icon: <VideoIc />, name: "视频" },
  { icon: <FontIc />, name: "字体" },
  { icon: <GlobeIc />, name: "OneDrive" },
  { icon: <FolderIc />, name: "个人实现" },
];
const VOLUMES = ["Win 11 Home Chi x64 (C:)", "Software (D:)", "Project (E:)", "Resources (F:)"].map((name) => ({ icon: <DiskIc />, name }));
const RECENT = [
  { icon: <FolderIc />, name: "source" },
  { icon: <DesktopIc />, name: "桌面" },
  { icon: <FolderIc />, name: "案例" },
  { icon: <FolderIc />, name: "textures" },
];

function Sidebar() {
  return (
    <aside className="flex w-[464px] shrink-0 overflow-hidden bg-[#303030] pl-[14px] pt-[3px]">
      <div className="flex w-[432px] flex-col gap-[3px]">
        <Panel title="书签">
          <button type="button" className="flex h-[36px] w-full items-center rounded-lg bg-[#545454] pl-[13px] text-[#e6e6e6]">
            <Ic size={20}><path d="M14 1v26M1 14h26" /></Ic>
            <span className="flex-1 text-center">添加书签</span>
          </button>
        </Panel>
        <Panel title="系统">
          <div className="rounded-lg bg-[#2c2c2c] pt-[6px]">
            <div className="flex">
              <Places items={SYSTEM} />
              <div className="mr-[7px] w-[20px] rounded-full border-2 border-[#3d3d3d]"><div className="h-[298px] rounded-full bg-[#545454]" /></div>
            </div>
            <ListFoot />
          </div>
        </Panel>
        <Panel title="卷标">
          <div className="rounded-lg bg-[#2c2c2c] pt-[6px]">
            <Places items={VOLUMES} />
            <ListFoot />
          </div>
        </Panel>
        <Panel title="最近打开的">
          <div className="flex items-start gap-[19px]">
            <div className="flex flex-1 rounded-lg bg-[#2c2c2c] pt-[6px]">
              <Places items={RECENT} inset />
              <div className="mr-[7px] mt-[2px] w-[20px] rounded-full border-2 border-[#3d3d3d] bg-[#545454]" />
            </div>
            <button type="button" aria-label="最近项选项" className="flex h-[36px] w-[35px] items-center justify-center rounded-lg bg-[#242424] text-[#e6e6e6]"><BigDown /></button>
          </div>
        </Panel>
      </div>
      <div className="ml-[6px] mt-[16px] h-[859px] w-[7px] rounded-full bg-[#3d3d3d]" />
    </aside>
  );
}

const FILES: [string, string][] = [
  ["GEN4DR_INTERIOR_dif.jpg", "104 KiB"],
  ["GEN4DR_INTERIOR_Met.jpg", "27 KiB"],
  ["GEN4DR_INTERIOR_Nrm.jpg", "28 KiB"],
  ["GEN4DR_INTERIOR_Rough.jpg", "28 KiB"],
  ["Generic_bodymat_dif.jpg", "110 KiB"],
  ["GENERIC_LIGHT_GLASS_dif.jpg", "80 KiB"],
  ["GENERIC_LIGHT_GLASS_nrm.jpg", "79 KiB"],
  ["RB1b_Tire_dif.jpg", "43 KiB"],
  ["RB1b_Tire_nrm.jpg", "73 KiB"],
  ["RB1c_Tire_Met.jpg", "36 KiB"],
  ["RB1c_Tire_Rough.jpg", "47 KiB"],
  ["UCB_BOTTOM_DIF.jpg", "160 KiB"],
  ["UCB_BOTTOM_met.jpg", "197 KiB"],
  ["UCB_BOTTOM_nrm.jpg", "280 KiB"],
  ["UCB_BOTTOM_rough.jpg", "105 KiB"],
  ["UCB_GLASS_CLEAN_dif.png", "60 KiB"],
];

function DialogToolbar() {
  const g = "h-[50px]";
  const b = "w-[47px] bg-[#545454]";
  return (
    <div className="flex h-[81px] shrink-0 items-center border-b border-[#1d1d1d] pl-[15px] pr-[15px] text-[#e6e6e6]">
      <Group className={g}>
        <Btn label="后退" className={b}><Ic size={26}><path d="M2 14h25M9 7l-7 7 7 7" /></Ic></Btn>
        <Btn label="前进" className={b}><Ic size={26}><path d="M1 14h25M19 7l7 7-7 7" /></Ic></Btn>
        <Btn label="上级目录" className={b}><Ic size={26}><path d="M10 2v20q0 4 4 4h12M3 9l7-7 7 7" /></Ic></Btn>
        <Btn label="刷新" className={b}><Ic><path d="M2 13a12 12 0 0 1 22-6M26 2v8h-8M26 15a12 12 0 0 1-22 6M2 27v-9h8" /></Ic></Btn>
      </Group>
      <Group className="ml-[18px] h-[50px]">
        <Btn label="新建文件夹" className="w-[47px] bg-[#545454] text-[#a8a8a8]">
          <Ic><path d="M1.500 11v15.500h23V16" /><path {...F} d="M0 4h8v4h6v5H0z" /><circle cx="22" cy="7" r="7" fill="#e6e6e6" stroke="none" /><path d="M22 3v8M18 7h8" stroke="#545454" /></Ic>
        </Btn>
      </Group>
      <div className="ml-[10px] min-w-0 flex-1 rounded-md border-[5px] border-[#ff1f0f]">
        <input
          aria-label="文件路径"
          defaultValue={"C:\\Users\\29029\\Desktop\\...3-low-poly-model\\textures\\"}
          className="h-[50px] w-full rounded-lg border-2 border-[#3e3e3e] bg-[#1d1d1d] px-[13px] outline-none"
        />
      </div>
      <Group className="ml-[12px] h-[50px]">
        <label className="flex w-[215px] items-center gap-[13px] bg-[#1d1d1d] pl-[7px]">
          <Search />
          <input type="search" aria-label="搜索文件" placeholder="搜索" className="w-0 flex-1 bg-transparent outline-none placeholder:text-[#5c5c5c]" />
        </label>
      </Group>
      <Group className="ml-[16px] h-[50px]">
        <Btn label="竖排列表" className="w-[46px] bg-[#4772b3] text-white">
          <Ic><path d="M2 2h6v24H2zM2 7h6M2 12h6M2 17h6M2 22h6" /><path d="M11 4h17M11 10h17M11 16h17" strokeDasharray="2 2" /></Ic>
        </Btn>
        <Btn label="横排列表" className="w-[46px] bg-[#545454] text-[#c0c0c0]">
          <Ic><path d="M2 2h6v24H2zM2 7h6M2 12h6M2 17h6M2 22h6M18 2h5v11h-5zM18 7h5" /><path d="M12 4v14M26.500 4v8" strokeDasharray="2 4" /></Ic>
        </Btn>
        <Btn label="缩略图" className="w-[46px] bg-[#545454] text-[#c0c0c0]">
          <Ic><path d="M2 2h7v9H2zM19 2h7v9h-7zM2 17h7v9H2zM19 17h7v9h-7z" /></Ic>
        </Btn>
        <Btn label="显示选项" className="w-[48px] bg-[#282828]"><BigDown /></Btn>
      </Group>
      <Group className="ml-[16px] h-[50px]">
        <Btn label="过滤" className="w-[46px] bg-[#545454]"><Ic><path d="M1 2h26L17 14v8l-6 5V14z" /></Ic></Btn>
        <Btn label="过滤选项" className="w-[48px] bg-[#282828]"><BigDown /></Btn>
      </Group>
      <Group className="ml-[16px] h-[50px]">
        <Btn label="设置" className="w-[46px] bg-[#545454]">
          <Ic>
            <circle cx="14" cy="14" r="6.500" strokeWidth="6" />
            <circle cx="14" cy="14" r="11.500" strokeWidth="4.500" strokeDasharray="4.500 4.530" strokeDashoffset="2.250" />
          </Ic>
        </Btn>
      </Group>
    </div>
  );
}

const HEAD = "h-[45px] p-0 align-top font-normal";
const HEAD_IN = "flex h-[43px] items-center border-b-2 border-[#1d1d1d] bg-[#343434]";

function FileTable() {
  return (
    <div className="relative min-h-0 flex-1 bg-[repeating-linear-gradient(#282828_0,#282828_37px,#2b2b2b_37px,#2b2b2b_74px)] bg-[position:0_45px]">
      <table className="w-full table-fixed border-separate border-spacing-0 text-left text-[#e6e6e6]">
        <colgroup>
          <col />
          <col className="w-[248px]" />
          <col className="w-[176px]" />
        </colgroup>
        <thead>
          <tr className="bg-[#282828]">
            <th scope="col" className={HEAD}>
              <div className={HEAD_IN + " justify-between pl-[19px] pr-[14px]"}>
                名称
                <span className="border-x-[6px] border-t-[12px] border-x-transparent border-t-[#b0b0b0]" />
              </div>
            </th>
            <th scope="col" className={HEAD}><div className={HEAD_IN}><span className="border-l-2 border-[#202020] pl-[18px]">修改日期</span></div></th>
            <th scope="col" className={HEAD}><div className={HEAD_IN}><span className="border-l-2 border-[#202020] pl-[18px]">尺寸</span></div></th>
          </tr>
        </thead>
        <tbody>
          {FILES.map(([name, size]) => (
            <tr key={name} className="h-[37px]">
              <td className="p-0 pl-[23px]"><div className="flex items-center gap-[6px]"><Photo />{name}</div></td>
              <td className="p-0 pl-[20px]">23 Mar 2025 12:05</td>
              <td className="p-0 pr-[50px] text-right">{size}</td>
            </tr>
          ))}
        </tbody>
      </table>
      <button type="button" aria-label="展开侧栏" className="absolute right-0 top-[28px] flex h-[27px] w-[17px] items-center justify-center rounded-l-md bg-[#222] text-[#a0a0a0]">
        <svg width="10" height="16" viewBox="0 0 10 16" fill="none" stroke="currentColor" strokeWidth="2" aria-hidden="true"><path d="M9 1 2 8l7 7" /></svg>
      </button>
      <span className="absolute bottom-[16px] right-[5px] top-[61px] w-[7px] rounded-full bg-[#3d3d3d]" />
    </div>
  );
}

function FileDialog() {
  return (
    <div role="dialog" aria-label="Blender文件视图" className="absolute bottom-[218px] left-[208px] right-[353px] top-[146px] flex flex-col overflow-hidden rounded-xl border-2 border-[#565656] bg-[#303030] shadow-[0_16px_60px_rgba(0,0,0,0.5)]">
      <div className="flex h-[43px] shrink-0 items-center bg-[#faf1e6] pl-[10px] text-black">
        <Logo />
        <h2 className="ml-[8px] font-['Open_Sans','Noto_Sans_CJK_SC',sans-serif] text-[17px]">Blender文件视图</h2>
        <div className="ml-auto flex items-center gap-[54px] pr-[26px]">
          <button type="button" aria-label="最小化" className="flex h-[16px] w-[15px] items-center"><span className="block h-px w-full bg-black" /></button>
          <button type="button" aria-label="最大化" className="h-[16px] w-[16px] rounded-xs border border-black" />
          <button type="button" aria-label="关闭"><CloseIc size={17} /></button>
        </div>
      </div>
      <div className="flex min-h-0 flex-1">
        <Sidebar />
        <div className="flex min-w-0 flex-1 flex-col">
          <DialogToolbar />
          <FileTable />
          <div className="relative flex h-[80px] shrink-0 items-start gap-[15px] px-[15px] pt-[15px] text-white">
            <input aria-label="文件名" className="h-[50px] min-w-0 flex-1 rounded-lg border-2 border-[#373737] bg-[#262626] px-[14px] outline-none" />
            <button type="button" className="h-[54px] w-[247px] rounded-md border-[5px] border-[#ff1f0f] bg-[#628bca] pb-[4px]">查找缺失的文件</button>
            <button type="button" className="h-[50px] w-[248px] rounded-lg border-2 border-[#3e3e3e] bg-[#545454] text-[#e6e6e6]">取消</button>
            <button type="button" aria-label="展开区域" className="absolute bottom-0 right-[30px] flex h-[14px] w-[26px] items-center justify-center rounded-t-md bg-[#262626] text-[#a0a0a0]">
              <svg width="14" height="9" viewBox="0 0 14 9" fill="none" stroke="currentColor" strokeWidth="2" aria-hidden="true"><path d="M1 8l6-6 6 6" /></svg>
            </button>
            <div role="tooltip" className="absolute bottom-[64px] right-[250px] h-[90px] w-[190px] rounded-lg border border-[#242424] bg-[#191919] pl-[23px] pt-[12px] leading-[34px] text-[#d8d8d8] shadow-lg">
              <p>执行选择文件.</p>
              <p className="text-[#a6a6a6]">快捷键: 回车键</p>
            </div>
          </div>
        </div>
      </div>
    </div>
  );
}

export default function App() {
  return (
    <div className="relative flex h-screen flex-col overflow-hidden whitespace-nowrap bg-[#161616] font-['Inter','Noto_Sans_CJK_SC',sans-serif] text-[21px] leading-[28px] tabular-nums [font-feature-settings:'cv08']">
      <TitleBar />
      <TopBar />
      <main className="flex min-h-0 flex-1 gap-[7px] pl-[2px] pr-px">
        <div className="flex min-w-0 flex-1 flex-col gap-[8px]">
          <Viewport />
          <Timeline />
        </div>
        <div className="flex w-[439px] shrink-0 flex-col gap-[7px]">
          <Outliner />
          <Properties />
        </div>
      </main>
      <StatusBar />
      <div className="h-[2px] shrink-0 bg-[#bcaea6]" />
      <FileDialog />
    </div>
  );
}
